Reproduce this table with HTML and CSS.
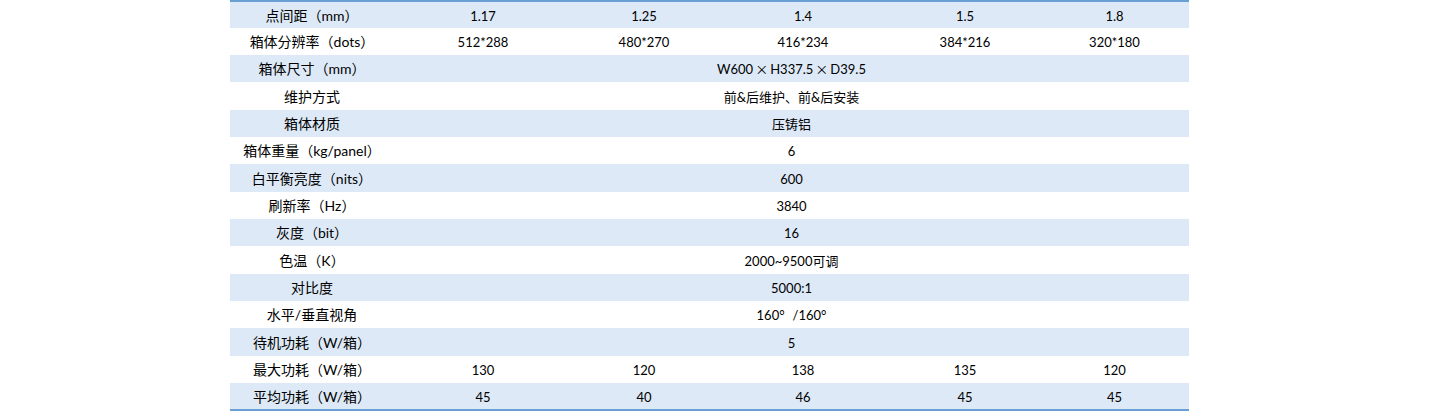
FILE: index.html
```html
<!DOCTYPE html>
<html lang="zh-CN">
<head>
<meta charset="utf-8">
<title>参数表</title>
<link rel="stylesheet" href="styles.css">
</head>
<body>
<table class="spec">
  <colgroup>
    <col class="c-label"><col class="c-a"><col class="c-b"><col class="c-c"><col class="c-d"><col class="c-e">
  </colgroup>
  <tbody>
    <tr><td>点间距（mm）</td><td>1.17</td><td>1.25</td><td>1.4</td><td>1.5</td><td>1.8</td></tr>
    <tr><td>箱体分辨率（dots）</td><td>512*288</td><td>480*270</td><td>416*234</td><td>384*216</td><td>320*180</td></tr>
    <tr><td>箱体尺寸（mm）</td><td colspan="5">W600<span class="x">×</span>H337.5<span class="x">×</span>D39.5</td></tr>
    <tr><td>维护方式</td><td colspan="5">前&amp;后维护、前&amp;后安装</td></tr>
    <tr><td>箱体材质</td><td colspan="5">压铸铝</td></tr>
    <tr><td>箱体重量（kg/panel）</td><td colspan="5">6</td></tr>
    <tr><td>白平衡亮度（nits）</td><td colspan="5">600</td></tr>
    <tr><td>刷新率（Hz）</td><td colspan="5">3840</td></tr>
    <tr><td>灰度（bit）</td><td colspan="5">16</td></tr>
    <tr><td>色温（K）</td><td colspan="5">2000~9500可调</td></tr>
    <tr><td>对比度</td><td colspan="5">5000:1</td></tr>
    <tr><td>水平/垂直视角</td><td colspan="5">160<span class="deg">°</span>/160<span class="deg2">°</span></td></tr>
    <tr><td>待机功耗（W/箱）</td><td colspan="5">5</td></tr>
    <tr><td>最大功耗（W/箱）</td><td>130</td><td>120</td><td>138</td><td>135</td><td>120</td></tr>
    <tr><td>平均功耗（W/箱）</td><td>45</td><td>40</td><td>46</td><td>45</td><td>45</td></tr>
  </tbody>
</table>
</body>
</html>
```

FILE: styles.css
```css
html, body {
  margin: 0;
  padding: 0;
  background: #ffffff;
}

body {
  font-family: "Lato", "Noto Sans CJK SC", sans-serif;
  font-size: 13px;
  color: #000000;
}

.spec {
  margin-left: 230px;
  width: 959px;
  border-collapse: collapse;
  table-layout: fixed;
  border-top: 2px solid #6a9fd4;
  border-bottom: 2px solid #6a9fd4;
}

.c-label { width: 164px; }
.c-a { width: 178px; }
.c-b { width: 144px; }
.c-c { width: 174px; }
.c-d { width: 150px; }
.c-e { width: 149px; }

.spec td {
  height: 27px;
  padding: 1px 0 0 0;
  box-sizing: border-box;
  text-align: center;
  vertical-align: middle;
  white-space: nowrap;
  line-height: 16px;
}

.spec tr:nth-child(3n+4) td {
  height: 28px;
}

.spec td:first-child {
  font-size: 14px;
}

.spec tr:nth-child(odd) td {
  background: #dde9f6;
}

.x {
  font-family: "Noto Sans CJK SC", sans-serif;
  margin: 0 2px;
}

.deg {
  margin-right: 8px;
}
```
